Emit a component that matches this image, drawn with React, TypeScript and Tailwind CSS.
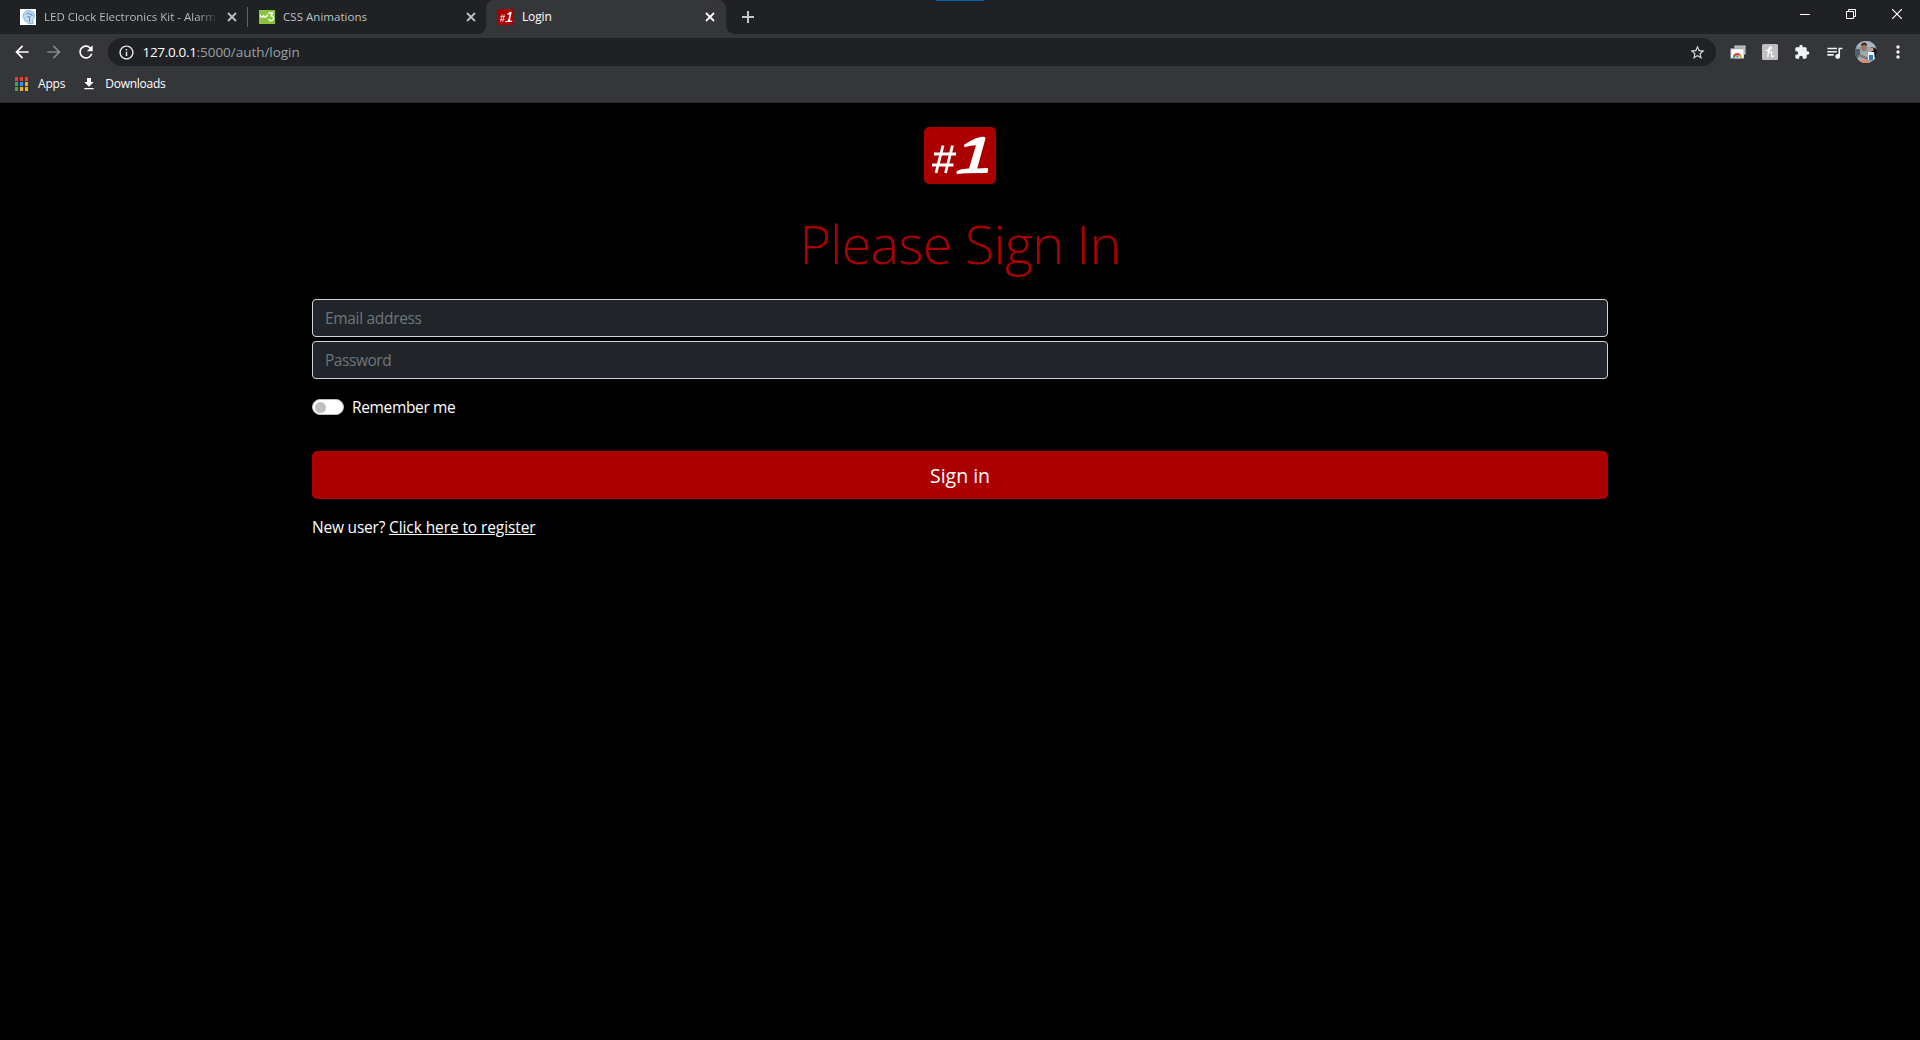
import React from "react";
import {
  MdArrowBack,
  MdArrowForward,
  MdExtension,
  MdFileDownload,
  MdInfoOutline,
  MdMoreVert,
  MdQueueMusic,
  MdRefresh,
  MdStarBorder,
} from "react-icons/md";

function Cross({ className }: { className: string }) {
  return (
    <svg viewBox="0 0 10 10" className={className} fill="none" stroke="currentColor">
      <path d="M1 1l8 8M9 1l-8 8" strokeWidth="1.8" />
    </svg>
  );
}

function HeadIcon() {
  return (
    <svg viewBox="0 0 16 16" className="size-4 shrink-0 bg-white" fill="none">
      <path d="M4 8.5C2.2 5.200 4.500 1.800 8.500 1.700c4-.1 6.300 2.500 5.900 5.600-.3 2-1.500 2.800-1.700 4.400-.1 1 .1 2 .5 3H8.200c0-1-.2-1.700-1-1.900-1.700-.1-2.400-.3-2.300-1.800L4 10.200z" fill="#c3dbef" stroke="#6ea4cf" strokeWidth=".8" />
      <path d="M6 5.500c1-1.600 3-1.600 3.600-.2 1.400-1 3 .2 2.400 1.700M7 8c1.200-.8 2 .3 3.400-.3M9.500 8v5" stroke="#3f7fb5" strokeWidth=".9" />
      <path d="M2 10l2-1.500M1.500 7h2" stroke="#9cc3e2" strokeWidth=".8" />
    </svg>
  );
}

function W3Icon() {
  return (
    <svg viewBox="0 0 16 14" className="h-3.5 w-4 shrink-0 bg-[#8ac53f]" fill="none" stroke="#fff" strokeLinecap="round" strokeLinejoin="round">
      <path d="M1.300 5.200c.2 2.600 2.800 2.600 3.300.2.200 2.400 2.900 2.400 3.900-.4" strokeWidth="1.300" />
      <path d="M9.700 3h4.200l-2.200 2.900c2.300-.2 3.100 1.200 2.700 3-.5 2.100-3.400 2.500-4.500.5" strokeWidth="1.300" />
    </svg>
  );
}

function NumberOne({ className }: { className: string }) {
  return (
    <svg viewBox="0 0 72 57" preserveAspectRatio="none" className={className} fill="none">
      <rect width="72" height="57" rx="5" fill="#a00" />
      <path d="M19 18.500L12 46M28.500 18.500L21.500 46M10 27h22M8 38h21.500" stroke="#fff" strokeWidth="2.800" />
      <path
        d="M40.500 17.500C46 14.500 51.500 10 59.500 9.700c1.700 0 2.300.8 1.800 2.600L53.200 41.500l10.300-.5c1 .1.700 4.800-.5 5l-21.500.3-8 .7c-1.500 0-1.100-2.500 0-3.200 3-1.900 7.400-1.700 11.500-2.200L52 18.300c-3.600.2-6.700.6-10.200 1.700-1.700.3-2.700-1.500-1.300-2.500z"
        fill="#fff"
      />
    </svg>
  );
}

function ScreenStackIcon() {
  return (
    <svg viewBox="0 0 16 16" className="size-4" fill="none">
      <path d="M4.500 1.500h11v9h-2v-6h-9z" fill="#d0d2d4" />
      <path d="M5.500 3h8.500v6" stroke="#8d9092" strokeWidth=".8" />
      <rect x="1" y="5" width="12.500" height="9" fill="#fff" stroke="#d5d7d9" />
      <path d="M2.800 13.500a4.500 4.500 0 0 1 9-.2z" fill="#ea4335" />
      <path d="M2.800 13.800a4.500 4.500 0 0 1 .9-3l3 3z" fill="#34a853" />
      <path d="M11.800 13.800a4.500 4.500 0 0 0-.7-2.600H8.500v2.600z" fill="#fbbc05" />
      <path d="M5.200 13.800a2.200 2.200 0 0 1 4.400 0z" fill="#4285f4" stroke="#fff" strokeWidth=".6" />
    </svg>
  );
}

function HoneyIcon() {
  return (
    <svg viewBox="0 0 16 16" className="size-4" fill="none">
      <rect width="16" height="16" rx="1.500" fill="#bfbfbf" />
      <path d="M4 6.500C7 6.500 9.800 5 9.500 3.500 9.200 2.200 7.200 2.700 6.800 5L5.800 13M6.300 9.500c1.200-2.300 3.700-2.600 3.500-.7l-.4 2.600c-.1 1.500 1.300 1.500 2.300.4" stroke="#fff" strokeWidth="1.200" strokeLinecap="round" />
    </svg>
  );
}

function Avatar() {
  return (
    <svg viewBox="0 0 22 22" className="size-[22px] rounded-full">
      <rect width="22" height="22" fill="#8fa3b3" />
      <path d="M0 0h22v6H0z" fill="#a5b6c2" />
      <path d="M0 8h5v9H0z" fill="#55606a" />
      <path d="M16 6l6 2v9h-5z" fill="#15181b" />
      <path d="M3 22c-.5-7 2-10 6-11 4 0 6 3 6 11z" fill="#aaa8a7" />
      <path d="M5 13l9 4-1 2-8-3z" fill="#777a7e" />
      <ellipse cx="9" cy="6" rx="2.800" ry="4" fill="#a86f5b" />
      <path d="M6 5C5.500 1 12.500 0 12 5 10.500 3.500 8 3.500 6 5z" fill="#3c2b28" />
      <circle cx="16.500" cy="8.500" r="2" fill="#c99a85" />
      <path d="M13 11h6l1 8h-7z" fill="#eef3f7" />
      <path d="M14 14h4v5h-4z" fill="#2d82b5" />
      <path d="M5 19h10v3H5z" fill="#d98a73" />
    </svg>
  );
}

const appDots = [
  "bg-[#f23a30]", "bg-[#f23a30]", "bg-[#f23a30]",
  "bg-[#3aa757]", "bg-[#2196f3]", "bg-[#f9a80c]",
  "bg-[#3aa757]", "bg-[#f9b20c]", "bg-[#f9b20c]",
];

function TabStrip() {
  return (
    <div className="flex h-[34px] bg-[#202124] text-[11.500px] text-[#bdc1c6]">
      <div className="ml-2 flex w-[239px] items-center pl-3">
        <HeadIcon />
        <span className="ml-2 w-[174px] overflow-hidden bg-linear-to-r from-[#bdc1c6] from-88% to-transparent bg-clip-text whitespace-nowrap text-transparent">
          LED Clock Electronics Kit - Alarm
        </span>
        <Cross className="ml-[9px] size-2.5 shrink-0" />
      </div>
      <div className="my-[7px] h-5 w-px bg-[#5f6368]" />
      <div className="flex w-[238px] items-center pl-[11px]">
        <W3Icon />
        <span className="ml-2 whitespace-nowrap tracking-[0.040px]">CSS Animations</span>
        <Cross className="mr-2.5 ml-auto size-2.5" />
      </div>
      <div className="relative flex w-60 items-center rounded-t-lg bg-[#35363a] pl-3 text-xs text-white">
        <div className="absolute bottom-0 -left-2 size-2 bg-[radial-gradient(circle_at_0_0,#202124_7.500px,#35363a_8px)]" />
        <div className="absolute -right-2 bottom-0 size-2 bg-[radial-gradient(circle_at_100%_0,#202124_7.500px,#35363a_8px)]" />
        <NumberOne className="size-4" />
        <span className="ml-2 tracking-[-0.150px]">Login</span>
        <Cross className="mr-[11px] ml-auto size-2.5" />
      </div>
      <svg viewBox="0 0 12 12" className="mt-[11px] ml-4 size-3" stroke="#c5c8cb" strokeWidth="2">
        <path d="M6 0v12M0 6h12" />
      </svg>
      <div className="ml-[182px] h-px w-12 bg-[#0063b1]" />
      <div className="ml-auto flex h-7 text-white">
        <div className="flex w-[46px] items-center justify-center">
          <div className="h-px w-2.5 bg-white" />
        </div>
        <div className="flex w-[46px] items-center justify-center">
          <svg viewBox="0 0 10 10" className="size-2.5" fill="none" stroke="currentColor">
            <path d="M.5 2.500h7v7h-7zM2.500 2.500v-2h7v7h-2" />
          </svg>
        </div>
        <div className="flex w-[46px] items-center justify-center">
          <svg viewBox="0 0 10 10" className="size-2.5" fill="none" stroke="currentColor">
            <path d="M0 0l10 10M10 0L0 10" strokeWidth="1.200" />
          </svg>
        </div>
      </div>
    </div>
  );
}

function Toolbar() {
  return (
    <div className="flex h-9 items-center pl-3 text-white">
      <MdArrowBack className="size-5" />
      <MdArrowForward className="ml-3 size-5 text-[#85878a]" />
      <MdRefresh className="ml-3 size-5" />
      <div className="ml-3 flex h-7 w-[1608px] items-center rounded-full bg-[#202124] pr-2.5 pl-[9.500px] text-[13.500px]">
        <MdInfoOutline className="size-[17px] text-[#e8eaed]" />
        <span className="ml-2 tracking-[-0.320px]">127.0.0.1</span>
        <span className="tracking-[-0.040px] text-[#9aa0a6]">:5000/auth/login</span>
        <MdStarBorder className="ml-auto size-[17px] text-[#dadce0]" />
      </div>
      <div className="ml-1.5 flex">
        <div className="flex w-8 items-center justify-center"><ScreenStackIcon /></div>
        <div className="flex w-8 items-center justify-center"><HoneyIcon /></div>
        <div className="flex w-8 items-center justify-center"><MdExtension className="size-4 text-[#f1f3f4]" /></div>
        <div className="flex w-8 items-center justify-center"><MdQueueMusic className="size-[19px] text-[#f1f3f4]" /></div>
        <div className="flex w-8 items-center justify-center"><Avatar /></div>
        <div className="flex w-8 items-center justify-center"><MdMoreVert className="size-5 text-[#f1f3f4]" /></div>
      </div>
    </div>
  );
}

function BookmarksBar() {
  return (
    <div className="flex h-7 items-center pl-[15px] text-xs text-white">
      <div className="grid grid-cols-3 gap-x-0.5 gap-y-px">
        {appDots.map((c, i) => (
          <div key={i} className={`h-1 w-[3px] ${c}`} />
        ))}
      </div>
      <span className="ml-2.5 tracking-[-0.200px]">Apps</span>
      <MdFileDownload className="ml-4 size-4" />
      <span className="ml-2 tracking-[-0.250px]">Downloads</span>
    </div>
  );
}

export default function App() {
  return (
    <div className="h-[1040px] w-[1920px] overflow-hidden bg-black font-['Open_Sans',sans-serif]">
      <TabStrip />
      <div className="h-[69px] border-b border-[#2a2a2b] bg-[#35363a]">
        <Toolbar />
        <BookmarksBar />
      </div>
      <main className="mx-auto flex w-[1296px] flex-col pt-6 text-[15.500px] text-white">
        <NumberOne className="h-[57px] w-[72px] self-center" />
        <h1 className="mt-[26px] h-[67px] text-center text-[54px] leading-[66px] font-light tracking-[-0.780px] text-[#a00]">
          Please Sign In
        </h1>
        <input
          placeholder="Email address"
          className="mt-[22px] h-[38px] rounded border border-[#ced4da] bg-[#212529] px-3 tracking-[-0.320px] placeholder:text-[#6c757d]"
        />
        <input
          type="password"
          placeholder="Password"
          className="mt-1 h-[38px] rounded border border-[#ced4da] bg-[#212529] px-3 tracking-[-0.450px] placeholder:text-[#6c757d]"
        />
        <label className="mt-4 flex h-6 items-center">
          <span className="flex h-4 w-8 items-center rounded-full border border-[#bfbfbf] bg-white pl-[1.500px]">
            <span className="size-[11px] rounded-full bg-[#bfbfbf]" />
          </span>
          <span className="ml-2 pt-0.5 tracking-[-0.350px]">Remember me</span>
        </label>
        <button className="mt-8 h-12 rounded-[5px] bg-[#a00] pt-px text-[19.500px]">Sign in</button>
        <p className="mt-4 h-6 leading-6">
          <span className="tracking-[-0.200px]">New user? </span>
          <a className="tracking-[-0.100px] underline">Click here to register</a>
        </p>
      </main>
    </div>
  );
}
